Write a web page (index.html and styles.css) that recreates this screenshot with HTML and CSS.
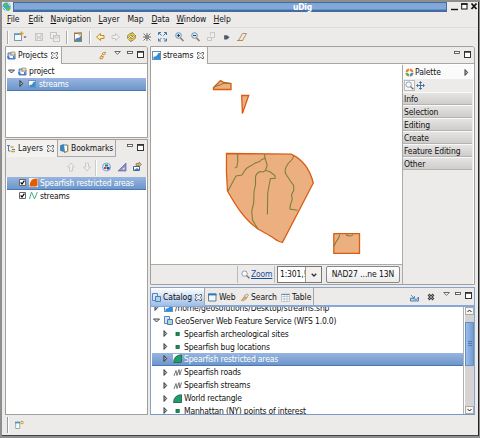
FILE: index.html
```html
<!DOCTYPE html>
<html lang="en">
<head>
<meta charset="utf-8">
<title>uDig</title>
<link rel="stylesheet" href="styles.css">
</head>
<body>
<svg class="defs" width="0" height="0">
  <symbol id="i-map" viewBox="0 0 9 9"><rect x=".5" y=".5" width="8" height="8" fill="#eef5fb" stroke="#6b8dae"/><path d="M1.500 8V6l3-1 2-3H8v6z" fill="#2d8fe0"/><path d="M1 1h4L4 4 1 5z" fill="#fff"/></symbol>
  <symbol id="i-close" viewBox="0 0 7 7"><path d="M.5.5h1.6l1.4 1.6L4.9.5h1.6v1.6L5.1 3.5l1.4 1.4v1.6H4.9L3.5 4.9 2.1 6.5H.5V4.9l1.4-1.4L.5 2.1z" fill="#fff" stroke="#444" stroke-width=".8"/></symbol>
  <symbol id="i-min" viewBox="0 0 6 3"><rect x=".5" y=".5" width="5" height="2" fill="#fff" stroke="#444" stroke-width=".8"/></symbol>
  <symbol id="i-max" viewBox="0 0 7 7"><rect x=".5" y=".5" width="6" height="6" fill="#fff" stroke="#333"/><path d="M0 1h7" stroke="#333" stroke-width="1.6"/></symbol>
  <symbol id="i-menu" viewBox="0 0 7 4"><path d="M.7.5h5.6L3.5 3.3z" fill="#fff" stroke="#444" stroke-width=".8"/></symbol>
  <symbol id="i-open" viewBox="0 0 7 7"><path d="M.5 2h6l-3 3z" fill="#ddd" stroke="#222" stroke-width=".8"/></symbol>
  <symbol id="i-shut" viewBox="0 0 7 7"><path d="M2 .6v5.8l2.7-2.9z" fill="#bbb" stroke="#222" stroke-width=".9"/></symbol>
  <symbol id="i-project" viewBox="0 0 9 9"><path d="M1 2h3v1h4v5H1z" fill="#bcd4f1" stroke="#43608f" stroke-width=".8"/><path d="M4 1h4v3H4z" fill="#f2dfa6" stroke="#777" stroke-width=".6"/><path d="M0 5h7l1.5 3H1z" fill="#4b7dd0"/><path d="M2 5h4v2H3z" fill="#fff"/></symbol>
  <symbol id="i-lens" viewBox="0 0 9 9"><circle cx="3.6" cy="3.6" r="2.7" fill="#f7fbff" stroke="#8295a5" stroke-width=".9"/><path d="M5.6 5.6l2.8 2.7" stroke="#7c6248" stroke-width="1.3"/></symbol>
  <symbol id="i-link" viewBox="0 0 10 10"><path d="M4.500 3.500L6 1.500h2.500L7.500 4H5L3 6h3L5 8.500H2L3 6" fill="none" stroke="#c3922a" stroke-width="1.1"/></symbol>
  <symbol id="i-area" viewBox="0 0 9 9"><path d="M0 0h9v9H0z" fill="#fff"/><path d="M.5 8.500Q1 1 8.500.7v7.800z" fill="#18a070" stroke="#22503e" stroke-width=".8"/></symbol>
  <symbol id="i-point" viewBox="0 0 9 9"><rect x="3" y="3.500" width="3.200" height="3" fill="#149064" stroke="#163" stroke-width=".8"/></symbol>
  <symbol id="i-line" viewBox="0 0 9 9"><path d="M1 8l2-5.500L4 7.500 6 1.500l.8 5.500L8.500 1.500" fill="none" stroke="#555" stroke-width=".8"/></symbol>
  <symbol id="i-service" viewBox="0 0 9 9"><path d="M.5.5h5v7h-5z" fill="#d6e6fb" stroke="#5b83c4"/><path d="M3.500 3.500h5v5h-5z" fill="#a5dccb" stroke="#4a76cc"/></symbol>
  <symbol id="i-globe" viewBox="0 0 10 10"><circle cx="4.600" cy="4.500" r="4" fill="#3aa3df"/><path d="M2 1l4 1-1 2-3 1zM5 5l4 1-2 3-3-1z" fill="#59c547"/><path d="M6 1l2 3M1 5l3 3" stroke="#dff3ff"/></symbol>
  <symbol id="i-palette" viewBox="0 0 9 9"><circle cx="4.500" cy="4.500" r="2.800" fill="none" stroke="#e98637" stroke-width="2.200"/><circle cx="4.500" cy="4.500" r="2.800" fill="none" stroke="#3a96cf" stroke-width="2.200" stroke-dasharray="4 13.600"/><circle cx="4.500" cy="4.500" r="2.800" fill="none" stroke="#5db34d" stroke-width="2.200" stroke-dasharray="4 13.600" stroke-dashoffset="-5"/><path d="M4.500 0v9M0 4.500h9" stroke="#fff" stroke-width=".7"/></symbol>
</svg>
<div class="window">
  <header class="title">
    <svg class="logo"><use href="#i-globe"/></svg>
    <div class="title-bar">uDig</div>
    <svg class="controls" viewBox="0 0 30 9"><path d="M3 7.500h7" stroke="#111" stroke-width="1.400"/><rect x="13.700" y="2" width="5.300" height="5" fill="#fff" stroke="#111"/><path d="M13 2h6.500" stroke="#111" stroke-width="1.500"/><path d="M23.500 1.500l5 5.500m0-5.500l-5 5.500" stroke="#111" stroke-width="1.800"/></svg>
  </header>
  <nav class="menu"><span><u>F</u>ile</span><span><u>E</u>dit</span><span><u>N</u>avigation</span><span><u>L</u>ayer</span><span>Map</span><span><u>D</u>ata</span><span><u>W</u>indow</span><span><u>H</u>elp</span></nav>
  <div class="toolbar">
    <svg viewBox="0 0 350 18">
      <path d="M2.500 3v13M61.500 3v13M84.500 3v13" stroke="#aaa"/><path d="M3.500 3v13M62.500 3v13M85.500 3v13" stroke="#fff"/>
      <rect x="9.500" y="6.500" width="7" height="6" fill="#eff8ff" stroke="#7e99ac"/><path d="M9 6h6" stroke="#4c95d5" stroke-width="1.500"/><path d="M14.500 5.500h4M16.500 3.500v4" stroke="#d6a21d" stroke-width="1.300"/><path d="M18.500 8.500h3l-1.500 1.500z" fill="#333"/>
      <g fill="#eee" stroke="#c5c5c5"><rect x="30.500" y="5.500" width="7" height="7"/><path d="M32 6v3h4V6M32 12v-2h4v2"/><rect x="45.500" y="4.500" width="6" height="6"/><rect x="48.500" y="7.500" width="6" height="6"/><path d="M50 8v2h3V8"/></g>
      <rect x="69.500" y="5.500" width="7" height="8" fill="#fff" stroke="#a77e45"/><path d="M70 12c2-4 4 0 6-5v6h-6z" fill="#388dda"/><path d="M73 5l3-1 1 2-3 2z" fill="#eab345"/><path d="M69 5h8" stroke="#777"/>
      <path d="M91.500 9l4-3.500v2h3.500v3h-3.500v2z" fill="#fff2b3" stroke="#bd8b2c"/><path d="M114.500 9l-4-3.500v2H107v3h3.500v2z" fill="#f1f1ee" stroke="#c5c5bf"/>
      <path d="M122.500 10.500V7.500l2.500-2h2V4l2.500 2.500L127 9V7.500h-1.500zM130.500 7v3l-2.500 2.500h-2V14l-2.500-2.500L126 9v1.500h1.500z" fill="#ecc63e" stroke="#8a7c38" stroke-width=".7"/>
      <path d="M138.500 5.500l7 7m0-7l-7 7M138 9h8M142 5v8" stroke="#777"/><circle cx="142" cy="9" r="2.200" fill="#888"/>
      <path d="M154 5l2.500 2.500M161 5l-2.500 2.500M154 12.500l2.500-2.500M161 12.500l-2.500-2.500M153.500 7v-2.500h2.500M159 4.500h2.500V7M153.500 10.500V13h2.500M159 13h2.500v-2.500" fill="none" stroke="#3f78a4" stroke-width="1"/>
      <g fill="#dceaf4" stroke="#7790a6"><circle cx="173.500" cy="7.500" r="2.800"/><circle cx="189.500" cy="7.500" r="2.800"/></g><path d="M175.500 10l3 3M191.500 10l3 3" stroke="#977757" stroke-width="1.500"/><path d="M172 7.500h3M173.500 6v3M188 7.500h3" stroke="#174e86" stroke-width="1.100"/>
      <path d="M202.500 9.500h4v3h-4zM205.500 7.500v-3h4v5h-3" fill="#eee" stroke="#c6c6c6"/>
      <path d="M219.800 8h2l1.700 1.200-1.700 1.500h-2z" fill="#425369" stroke="#555f6b" stroke-width="1.400"/><path d="M233.500 12.500l4-7h4l-4 7z" fill="#f6e7cd" stroke="#aa947a"/><path d="M232 12.500h6" stroke="#b78e4f"/>
    </svg>
  </div>
  <main class="work">
    <div class="left">
      <section class="panel projects">
        <div class="tabs"><div class="tab active projects-tab"><svg class="ic"><use href="#i-project"/></svg><span>Projects</span><svg class="x"><use href="#i-close"/></svg></div>
          <div class="tools"><svg class="ic link"><use href="#i-link"/></svg><svg class="tri"><use href="#i-menu"/></svg><svg class="mn"><use href="#i-min"/></svg><svg class="mx"><use href="#i-max"/></svg></div></div>
        <div class="rows project-rows">
          <div class="row"><svg class="arrow"><use href="#i-open"/></svg><svg class="ic"><use href="#i-project"/></svg><span>project</span></div>
          <div class="row child selected"><svg class="arrow"><use href="#i-shut"/></svg><svg class="ic sm"><use href="#i-map"/></svg><span>streams</span></div>
        </div>
      </section>
      <section class="panel layers">
        <div class="tabs"><div class="tab active layers-tab"><svg class="ic" viewBox="0 0 9 9"><path d="M0 1.500h3M1.500 2v5h2" stroke="#547eb0" fill="none"/><path d="M3.500 3h3M4 7.500h4" stroke="#d3a239" stroke-width="1.500"/><path d="M5 5.500h3" stroke="#579"/></svg><span>Layers</span><svg class="x"><use href="#i-close"/></svg></div>
          <div class="tab bookmarks-tab"><svg class="ic" viewBox="0 0 9 9"><path d="M.5 1.500l3-1v7l-3-1z" fill="#3186c9" stroke="#2a6493" stroke-width=".6"/><path d="M3.500 1h4v6l-3 1.500z" fill="#f8fcff" stroke="#467ba5"/><path d="M8 1v6.500l-3 1" stroke="#d6a43d" fill="none"/></svg><span>Bookmarks</span></div>
          <div class="tools"><svg class="mn"><use href="#i-min"/></svg><svg class="mx"><use href="#i-max"/></svg></div></div>
        <div class="layer-tools"><svg viewBox="0 0 80 18"><g fill="#eee" stroke="#ccc9c5"><path d="M1.500 9L5 5l3.500 4h-2v4h-3V9zM17.500 9l3.500 4 3.500-4h-2V5h-3v4z"/></g><path d="M29.500 2v16" stroke="#ccc"/><path d="M30.500 2v16" stroke="#fff"/><circle cx="40.500" cy="9" r="4" fill="#dceaff" stroke="#7da1d1"/><path d="M39 6.500h3v2h-3z" fill="#168c47"/><path d="M38 9h2.500v2H38z" fill="#d53b32"/><path d="M41 9h2.500v2.500H41z" fill="#244cae"/><path d="M52 13l8-8v8z" fill="#8f8bc8" stroke="#6969a5" stroke-width=".7"/><path d="M56 11.500l2.500-2.500v2.500z" fill="#eee"/><path d="M67.500 8.500h6v4h-6z" fill="#fff" stroke="#4b6786"/><path d="M68 12l3-2 3 2z" fill="#3389ca"/><path d="M70 5.500h3V4l2.500 2.500L73 9V7.500h-3z" fill="#ebb54c" stroke="#666" stroke-width=".6"/></svg></div>
        <div class="rows layer-rows">
          <div class="row selected"><svg class="check" viewBox="0 0 7 7"><path d="M.5.5h6v6h-6z" fill="#fff" stroke="#666"/><path d="M1.700 3.300L3 5l2.400-3.300" fill="none" stroke="#000" stroke-width="1.200"/></svg><svg class="ic" viewBox="0 0 9 9"><path d="M0 0h9v9H0z" fill="#eee"/><path d="M.5 8.500Q1 1 6 .8L8.500.5v7L7 8.500z" fill="#e25c05"/></svg><span>Spearfish restricted areas</span></div>
          <div class="row"><svg class="check" viewBox="0 0 7 7"><path d="M.5.5h6v6h-6z" fill="#fff" stroke="#666"/><path d="M1.700 3.300L3 5l2.400-3.300" fill="none" stroke="#000" stroke-width="1.200"/></svg><svg class="ic" viewBox="0 0 9 9"><path d="M.5 8L2.500 1l3 7 2.800-7" fill="none" stroke="#4caf8c"/></svg><span>streams</span></div>
        </div>
      </section>
    </div>
    <div class="right">
      <section class="panel editor">
        <div class="tabs"><div class="tab active editor-tab"><svg class="ic"><use href="#i-map"/></svg><span>streams</span><svg class="x"><use href="#i-close"/></svg></div><div class="tools"><svg class="mn"><use href="#i-min"/></svg><svg class="mx"><use href="#i-max"/></svg></div></div>
        <div class="editor-body">
          <div class="canvas">
            <svg class="map" viewBox="152 65 250 199">
              <g fill="#ecaf80" stroke="#d95c12" stroke-width="1.300"><path d="M213.500 89.500v-2l7-7 3.500 2 7 1v6z"/><path d="M241.700 95.500h7l-6.300 18z"/><path d="M226.500 153.500l64.500.7c12 5.300 19 15.800 22.300 28.800L282.500 242.300c-4-.3-7-3-10-5-5-3.300-9-5.300-14.500-8.300-14-10-22-23-30.500-38q-1.600-19-1-37.500z"/><path d="M333.800 233.700h25.700v19.600h-25.700z"/></g>
              <g fill="none" stroke="#7d803b" stroke-width="1.100"><path d="M214 87l7-2.500 3-1.500 6 .5M237.700 154v8l-.8 5-1.900 1M264.700 154v4.500c-2 1-3 0-5 3l-5 1.800c-3 3-8 3-9.700 7l-3 4.700-6 1-3.500 6.500-4.500 8.500M264.700 157l2.500 8-1.700 5.500 4 1 5.500 4v3h-4.500l-1 4.500-1.800 10-.3 21.500M265.500 170.500l-2.500 1.500-3-.5c-2 1-4.500 3-4.500 6v7l-1.500 7.500-.3 11-2 8 .8 9 3 5 2.500 4M293.700 156c-1 5-5 5.500-6.500 9-2.500 4-3 7-1 9.500l4.500 7 3 4v5l-2.200 4 .7 5-2 6-.2 3.500 7.500 1.200M339.500 234.500c0 5-3 5-3.500 7.500l-2 4M346 234.500c2 2 6 2 7 0"/></g>
            </svg>
            <div class="map-status"><div class="status-space"></div><div class="zoom"><svg class="ic"><use href="#i-lens"/></svg><u>Zoom</u></div><div class="scale"><span>1:301,!</span><i><svg viewBox="0 0 6 4"><path d="M.7.7L3 3 5.300.7" stroke="#333" stroke-width="1.300" fill="none"/></svg></i></div><div class="crs">NAD27 ...ne 13N</div></div>
          </div>
          <aside class="palette">
            <div class="palette-head"><svg class="ic"><use href="#i-palette"/></svg><span>Palette</span><svg class="arrow"><use href="#i-shut"/></svg></div>
            <div class="palette-tools"><b><svg class="ic"><use href="#i-lens"/></svg></b><svg class="ic" viewBox="0 0 9 9"><path d="M4.500 1v7M1 4.500h7M3 2L4.500.5 6 2M3 7l1.500 1.500L6 7M2 3L.5 4.500 2 6M7 3l1.500 1.500L7 6" stroke="#3c6a9c" stroke-width=".9" fill="none"/></svg></div>
            <div class="drawer">Info</div><div class="drawer">Selection</div><div class="drawer">Editing</div><div class="drawer">Create</div><div class="drawer">Feature Editing</div><div class="drawer">Other</div>
          </aside>
        </div>
      </section>
      <section class="panel catalog">
        <div class="tabs"><div class="tab active catalog-tab"><svg class="ic"><use href="#i-service"/></svg><span>Catalog</span><svg class="x"><use href="#i-close"/></svg></div>
          <div class="tab web-tab"><svg class="ic" viewBox="0 0 9 9"><path d="M.5 1h7.500v7H.5z" fill="#f2f7fc" stroke="#637b9b"/><path d="M0 1.500h8.500" stroke="#2a76bf" stroke-width="1.800"/></svg><span>Web</span></div>
          <div class="tab search-tab"><svg class="ic" viewBox="0 0 9 9"><path d="M1 8l3-4 3 1-4 3" fill="#e8b256" stroke="#a98b5c" stroke-width=".7"/><path d="M4 3l3-2 1.500 1-2 3z" fill="#ffe696" stroke="#8686a0" stroke-width=".7"/></svg><span>Search</span></div>
          <div class="tab table-tab"><svg class="ic" viewBox="0 0 9 9"><path d="M.5 1h8v7.500h-8zM.5 3.500h8M.5 6h8M3.200 1v7.500M6 1v7.500" fill="#fff" stroke="#aab6c3" stroke-width=".7"/><path d="M.5 1.500h8" stroke="#648fbd"/></svg><span>Table</span></div>
          <div class="tools"><svg class="ic" viewBox="0 0 9 9"><path d="M.5 5v3h8V4L6.500 6.500 3 5.500z" fill="#bed8f3" stroke="#4275b2" stroke-width=".9"/><path d="M1 2l3 3M4.500 3v2H2.500" stroke="#4a6fa0" stroke-width=".8" fill="none"/></svg><svg class="kill" viewBox="0 0 8 8"><path d="M1.500 1.500l5 5m0-5l-5 5" stroke="#444" stroke-width="2.600"/><path d="M1.500 1.500l5 5m0-5l-5 5" stroke="#999" stroke-width="1"/></svg><svg class="tri"><use href="#i-menu"/></svg><svg class="mn"><use href="#i-min"/></svg><svg class="mx"><use href="#i-max"/></svg></div></div>
        <div class="catalog-body">
          <div class="tree">
            <div class="row"><svg class="arrow"><use href="#i-shut"/></svg><svg class="ic"><use href="#i-map"/></svg><span class="path">/home/geosolutions/Desktop/streams.shp</span></div>
            <div class="row"><svg class="arrow"><use href="#i-open"/></svg><svg class="ic"><use href="#i-service"/></svg><span>GeoServer Web Feature Service (WFS 1.0.0)</span></div>
            <div class="row child"><svg class="arrow"><use href="#i-shut"/></svg><svg class="ic"><use href="#i-point"/></svg><span>Spearfish archeological sites</span></div>
            <div class="row child"><svg class="arrow"><use href="#i-shut"/></svg><svg class="ic"><use href="#i-point"/></svg><span>Spearfish bug locations</span></div>
            <div class="row child selected"><svg class="arrow"><use href="#i-shut"/></svg><svg class="ic"><use href="#i-area"/></svg><span>Spearfish restricted areas</span></div>
            <div class="row child"><svg class="arrow"><use href="#i-shut"/></svg><svg class="ic"><use href="#i-line"/></svg><span>Spearfish roads</span></div>
            <div class="row child"><svg class="arrow"><use href="#i-shut"/></svg><svg class="ic"><use href="#i-line"/></svg><span>Spearfish streams</span></div>
            <div class="row child"><svg class="arrow"><use href="#i-shut"/></svg><svg class="ic"><use href="#i-area"/></svg><span>World rectangle</span></div>
            <div class="row child"><svg class="arrow"><use href="#i-shut"/></svg><svg class="ic"><use href="#i-point"/></svg><span>Manhattan (NY) points of interest</span></div>
          </div>
          <div class="scroll"><div class="btn"><svg viewBox="0 0 5 4"><path d="M.5 3l2-2 2 2" stroke="#222" fill="none"/></svg></div><div class="gap"></div><div class="thumb"><svg viewBox="0 0 4 6"><path d="M0 .5h4M0 2.500h4M0 4.500h4" stroke="#466f9f" stroke-width=".8"/></svg></div><div class="track"></div><div class="btn"><svg viewBox="0 0 5 4"><path d="M.5 1l2 2 2-2" stroke="#222" fill="none"/></svg></div></div>
        </div>
      </section>
    </div>
  </main>
  <footer class="statusbar"><i></i><svg viewBox="0 0 10 10"><path d="M.7 2.500h4v6h-4z" fill="#fff" stroke="#9ba8a8"/><path d="M0 2.500h5" stroke="#4597ce" stroke-width="1.800"/><circle cx="7" cy="2.500" r="1.300" fill="#fff5a5" stroke="#c99b2b"/></svg></footer>
</div>
</body>
</html>
```
FILE: styles.css
```css
* { box-sizing: border-box; }
html, body { margin: 0; width: 480px; height: 438px; overflow: hidden; }
body {
  background: #8e8e8e;
  color: #111;
  font-family: "DejaVu Sans Condensed", "DejaVu Sans", sans-serif;
  font-stretch: condensed;
  font-size: 8.5px;
  letter-spacing: -0.17px;
  line-height: 13px;
  white-space: nowrap;
  padding: 2px;
}
svg { display: block; flex: none; }
.defs { position: absolute; }
.window { width: 477px; height: 434px; display: flex; flex-direction: column; background: #ecebea; border-right: 1px solid #222; border-bottom: 1px solid #444; }
.title { display: flex; height: 10px; flex: none; }
.logo { width: 10px; height: 10px; }
.title-bar { flex: 1; margin-left: 1px; background: linear-gradient(#7da5d6, #82aadc 75%, #446da7 90%); border: 1px solid #486b99; color: #fff; font-weight: bold; text-align: center; line-height: 8px; padding-left: 145px; }
.controls { width: 30px; height: 9px; margin-left: 1px; }
.menu { height: 15px; flex: none; display: grid; grid-template-columns: 21.5px 22px 48px 29px 24px 25px 37px auto; padding-left: 5px; line-height: 15px; letter-spacing: -.06px; }
.menu u { text-underline-offset: 1px; }
.toolbar { height: 19px; flex: none; padding-left: 3px; border-top: 1px solid #dedcda; }
.toolbar svg { width: 350px; height: 18px; }
.work { height: 369px; flex: none; display: flex; gap: 2px; padding-left: 3px; }
.left { width: 143px; display: flex; flex-direction: column; gap: 1px; }
.right { width: 325px; display: flex; flex-direction: column; gap: 2px; }
.panel { background: #fff; border: 1px solid #a3a09c; overflow: hidden; display: flex; flex-direction: column; }
.projects { height: 92px; border-top-right-radius: 3px; }
.layers { height: 276px; }
.editor { height: 239px; border-top-right-radius: 3px; }
.catalog { height: 128px; border-color: #86a4cc #86a4cc #7a97be; }
.tabs { height: 17px; flex: none; display: flex; background: #ecebea; border-bottom: 1px solid #aaa7a3; letter-spacing: -.06px; }
.tab { height: 17px; display: flex; align-items: center; gap: 2px; padding-left: 1px; border-right: 1px solid #a9a6a2; }
.tab.active { background: #fbfbfb; }
.ic { width: 9px; height: 9px; }
.x { width: 7px; height: 7px; margin-left: auto; margin-right: 3px; }
.tools { flex: 1; display: flex; justify-content: flex-end; gap: 6px; padding-top: 4px; padding-right: 3px; }
.mn { width: 6px; height: 3px; }
.mx { width: 7px; height: 7px; margin-left: -2px; }
.tri { width: 7px; height: 4px; }
.projects-tab { width: 56px; }
.layers .tabs { border-bottom-color: #ecebea; }
.layers .layers-tab { width: 52px; background: #f3f2f1; }
.bookmarks-tab { width: 58px; padding-left: 2px; border-bottom: 1px solid #aaa; }
.link { margin-right: 1px; }
.row { display: flex; align-items: center; height: 12.9px; line-height: 12px; gap: 2px; padding-left: 1px; }
.arrow { width: 7px; height: 7px; margin-right: 5px; }
.child { padding-left: 11px; }
.selected { background: linear-gradient(#98b5df, #6d96cb); color: #fff; border-bottom: 1px solid #4876b3; }
.project-rows { padding: 1px 1px 0; }
.project-rows .arrow { margin-right: 1px; }
.project-rows .selected .arrow { margin-right: 1px; }
.project-rows .sm { margin-right: 1px; }
.sm { width: 8px; height: 8px; }
.layer-tools { height: 20px; flex: none; background: #ecebea; padding: 1px 0 0 60px; }
.layer-tools svg { width: 80px; height: 18px; }
.layer-rows { padding: 0 1px; }
.layer-rows .row { padding-left: 12px; letter-spacing: -.18px; }
.layer-rows .row + .row { margin-top: -.5px; }
.check { width: 7px; height: 7px; margin-right: 1px; }
.editor-tab { width: 57px; }
.editor-body { display: flex; height: 220px; }
.canvas { width: 251px; display: flex; flex-direction: column; padding-top: 1px; }
.map { width: 250px; height: 199px; margin-left: 1px; }
.map-status { height: 20px; display: flex; background: #ecebea; border-top: 1px solid #aaa; gap: 2px; padding: 1px; }
.status-space { width: 86px; border-right: 1px solid #bbb; }
.zoom { width: 35px; display: flex; align-items: center; gap: 1px; padding-left: 1px; color: #1e4e9a; border-right: 1px solid #bbb; }
.zoom u { text-underline-offset: 1px; }
.scale { width: 45px; display: flex; background: #fff; border: 1px solid #777; line-height: 14px; }
.scale span { width: 28px; padding-left: 2px; overflow: hidden; border-right: 1px solid #999; }
.scale i { width: 15px; display: grid; place-items: center; background: #f2f1f0; }
.scale svg { width: 6px; height: 4px; }
.crs { width: 74px; margin-left: 2px; text-align: center; line-height: 14px; letter-spacing: -.08px; border: 1px solid #888; border-radius: 2px; background: linear-gradient(#fff, #ecebea); }
.palette { width: 71px; border-left: 1px solid #aaa; background: #ecebea; margin-top: 1px; letter-spacing: -.1px; }
.palette-head { height: 14px; background: #fbfbfb; display: flex; align-items: center; gap: 1px; padding-left: 2px; }
.palette-head .arrow { margin-left: auto; margin-right: 3px; }
.palette-tools { height: 13px; display: flex; gap: 1px; align-items: center; padding-left: 1px; }
.palette-tools b { border: 1px solid #bbb; background: #f7f7f7; }
.drawer { height: 13px; padding-left: 1px; line-height: 12px; background: linear-gradient(#e5e4e3, #cfcdcb); border-top: 1px solid #f8f8f8; border-bottom: 1px solid #b5b2af; margin-right: 1px; }
.catalog .tabs { height: 19px; border-bottom: 2px solid #86a8d7; }
.catalog .tab { height: 18px; }
.catalog .catalog-tab { width: 54px; background: linear-gradient(#fff, #9bbce8); }
.catalog-tab .x { margin-right: 2px; }
.web-tab { width: 31px; border: 0; padding-left: 3px; }
.search-tab { width: 41px; border: 0; padding-left: 4px; }
.table-tab { width: 37px; padding-left: 4px; }
.catalog .tools { gap: 8px; padding-top: 4px; padding-right: 2px; }
.catalog .tools .ic { margin-top: 1px; }
.kill { width: 8px; height: 8px; margin-top: 1px; }
.catalog .mn { margin-left: -3px; }
.catalog .mx { margin-left: -4px; }
.catalog-body { display: flex; height: 107px; overflow: hidden; }
.tree { width: 313px; border-right: 1px solid #b3b0ac; padding-left: 1px; margin-top: -5.6px; flex: none; }
.tree .arrow { margin-right: 2px; }
.tree .child { padding-left: 10px; }
.path { letter-spacing: -.12px; }
.scroll { width: 9px; margin-left: 1px; display: flex; flex-direction: column; background: #d6d4d2; }
.btn { height: 8px; border: 1px solid #aaa; background: #f5f5f5; display: grid; place-items: center; }
.btn svg { width: 5px; height: 4px; }
.gap { height: 7px; }
.thumb { height: 44px; background: linear-gradient(90deg, #9ebee8, #6f9bd2); border: 1px solid #668fc2; display: grid; place-items: center; }
.thumb svg { width: 4px; height: 6px; }
.track { flex: 1; }
.statusbar { height: 20px; display: flex; align-items: center; padding-left: 5px; gap: 6px; }
.statusbar i { width: 2px; height: 16px; border-left: 1px solid #999; border-right: 1px solid #fff; }
.statusbar svg { width: 10px; height: 10px; }
```
